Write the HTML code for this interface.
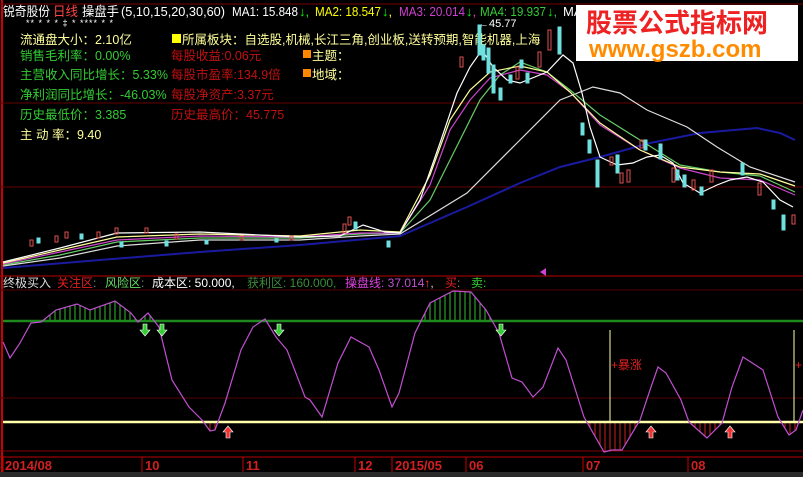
<!DOCTYPE html>
<html><head><meta charset="utf-8"><style>
html,body{margin:0;padding:0;background:#000;width:803px;height:477px;overflow:hidden}
svg{display:block}
text{font-family:"Liberation Sans","Noto Sans CJK SC","WenQuanYi Zen Hei",sans-serif}
</style></head><body>
<svg id="s" width="803" height="477" viewBox="0 0 803 477" xmlns="http://www.w3.org/2000/svg">
<rect width="803" height="477" fill="#000"/>
<line x1="2" y1="0" x2="2" y2="472" stroke="#c00" stroke-width="2"/>
<line x1="0" y1="4" x2="803" y2="4" stroke="#700" />
<line x1="0" y1="103" x2="803" y2="103" stroke="#600"/>
<line x1="0" y1="187" x2="803" y2="187" stroke="#600"/>
<line x1="0" y1="276" x2="803" y2="276" stroke="#b00"/>
<line x1="0" y1="290" x2="803" y2="290" stroke="#500"/>
<line x1="0" y1="398" x2="803" y2="398" stroke="#500"/>
<line x1="0" y1="451" x2="803" y2="451" stroke="#800"/>
<line x1="0" y1="457" x2="803" y2="457" stroke="#b00"/>
<rect x="0" y="472" width="803" height="5" fill="#2a2a2a"/>
<g stroke="#c00"><line x1="3" y1="457" x2="3" y2="472"/><line x1="142" y1="457" x2="142" y2="472"/><line x1="243" y1="457" x2="243" y2="472"/><line x1="355" y1="457" x2="355" y2="472"/><line x1="392" y1="457" x2="392" y2="472"/><line x1="466" y1="457" x2="466" y2="472"/><line x1="583" y1="457" x2="583" y2="472"/><line x1="688" y1="457" x2="688" y2="472"/></g>
<g fill="#d02020" font-size="13" font-weight="bold"><text x="5" y="470">2014/08</text><text x="145" y="470">10</text><text x="246" y="470">11</text><text x="358" y="470">12</text><text x="395" y="470">2015/05</text><text x="469" y="470">06</text><text x="586" y="470">07</text><text x="691" y="470">08</text></g>
<g font-size="13">
<text x="3" y="16" fill="#fff" textLength="47" lengthAdjust="spacingAndGlyphs">锐奇股份</text>
<text x="53" y="16" fill="#f44" textLength="25" lengthAdjust="spacingAndGlyphs">日线</text>
<text x="82" y="16" fill="#fff" textLength="37" lengthAdjust="spacingAndGlyphs">操盘手</text>
<text x="121" y="16" fill="#fff" textLength="104" lengthAdjust="spacingAndGlyphs">(5,10,15,20,30,60)</text>
<text x="232" y="16" fill="#fff" textLength="66" lengthAdjust="spacingAndGlyphs">MA1: 15.848</text><text x="299" y="16" fill="#0f0">↓,</text>
<text x="315" y="16" fill="#ff0" textLength="66" lengthAdjust="spacingAndGlyphs">MA2: 18.547</text><text x="382" y="16" fill="#0f0">↓<tspan fill="#ff0">,</tspan></text>
<text x="399" y="16" fill="#d040d0" textLength="66" lengthAdjust="spacingAndGlyphs">MA3: 20.014</text><text x="466" y="16" fill="#0f0">↓<tspan fill="#d040d0">,</tspan></text>
<text x="480" y="16" fill="#3c3" textLength="66" lengthAdjust="spacingAndGlyphs">MA4: 19.937</text><text x="547" y="16" fill="#0f0">↓<tspan fill="#3c3">,</tspan></text>
<text x="563" y="16" fill="#fff">MA</text>
</g>
<text x="26" y="26" font-size="9" fill="#fff" letter-spacing="1">** *        *       *      ‡         *       **** *       *</text>
<text x="478" y="27" font-size="11" fill="#fff">←45.77</text>
<g font-size="12.5">
<text x="20" y="44" fill="#ffff99">流通盘大小：2.10亿</text>
<text x="20" y="60" fill="#33cc33">销售毛利率：0.00%</text>
<text x="20" y="79" fill="#33cc33">主营收入同比增长：5.33%</text>
<text x="20" y="99" fill="#33cc33">净利润同比增长：-46.03%</text>
<text x="20" y="119" fill="#33cc33">历史最低价：3.385</text>
<text x="20" y="139" fill="#ffff99">主 动 率：9.40</text>
<rect x="172" y="34" width="9" height="9" fill="#ff0"/>
<text x="182" y="44" fill="#ffff99">所属板块：自选股,机械,长江三角,创业板,送转预期,智能机器,上海</text>
<text x="171" y="60" fill="#c01010">每股收益:0.06元</text>
<text x="171" y="79" fill="#c01010">每股市盈率:134.9倍</text>
<text x="171" y="99" fill="#c01010">每股净资产:3.37元</text>
<text x="171" y="119" fill="#c01010">历史最高价：45.775</text>
<rect x="303" y="50" width="8" height="8" fill="#f80"/><text x="312" y="60" fill="#ffff99">主题：</text>
<rect x="303" y="69" width="8" height="8" fill="#f80"/><text x="312" y="79" fill="#ffff99">地域：</text>
</g>
<g fill="none" stroke-width="1.2">
<polyline stroke="#1a1aa0" stroke-width="2" points="3,268 100,260 200,252 300,245 400,236 467,207 520,183 560,167 600,157 650,143 700,133 757,128 780,133 795,140"/>
<polyline stroke="#ddd" points="3,266 60,258 117,246 200,240 300,240 360,236 400,234 467,193 517,143 560,100 593,87 620,93 647,110 687,127 717,147 750,167 795,182"/>
<polyline stroke="#6c6" points="3,265 60,255 117,242 200,238 300,238 360,234 400,233 430,200 455,150 480,100 500,75 520,62 547,72 570,90 600,115 640,140 680,165 720,172 760,176 795,192"/>
<polyline stroke="#c4c" points="3,264 60,252 117,240 200,236 300,237 360,233 400,233 430,185 450,130 470,100 490,78 520,70 547,75 570,92 600,125 640,150 680,168 720,178 760,180 795,195"/>
<polyline stroke="#ff9" points="3,263 60,250 117,237 200,234 300,236 360,230 400,232 430,175 450,120 470,90 490,72 520,66 547,72 570,92 600,123 640,150 680,167 720,172 760,174 795,186"/>
<polyline stroke="#fff" points="3,262 60,248 117,233 200,232 300,237 340,236 363,225 385,232 400,233 420,200 440,143 457,93 470,67 482,50 493,67 507,80 520,83 547,72 563,55 573,63 582,93 590,127 600,157 617,165 633,163 647,157 660,155 673,163 683,183 700,193 717,185 730,180 747,177 763,182 780,200 793,207"/>
</g>
<g stroke-width="1">
<g stroke="#e05050" fill="none">
<rect x="30" y="240" width="3" height="6"/><rect x="55" y="236" width="3" height="6"/><rect x="65" y="232" width="3" height="6"/><rect x="97" y="232" width="3" height="6"/><rect x="115" y="228" width="3" height="6"/><rect x="145" y="228" width="3" height="5"/><rect x="175" y="234" width="3" height="5"/><rect x="240" y="236" width="3" height="4"/><rect x="290" y="236" width="3" height="4"/><rect x="343" y="224" width="3" height="9"/><rect x="348" y="217" width="3" height="8"/><rect x="460" y="57" width="3" height="10"/><rect x="516" y="67" width="3" height="12"/><rect x="538" y="52" width="3" height="15"/><rect x="548" y="30" width="3" height="20"/><rect x="610" y="157" width="3" height="8"/><rect x="620" y="173" width="3" height="10"/><rect x="627" y="170" width="3" height="12"/><rect x="640" y="140" width="3" height="8"/><rect x="672" y="168" width="3" height="14"/><rect x="692" y="180" width="3" height="10"/><rect x="710" y="170" width="3" height="12"/><rect x="758" y="183" width="3" height="12"/><rect x="792" y="215" width="3" height="9"/>
</g>
<g fill="#6fe0e0" stroke="#6fe0e0">
<rect x="37" y="238" width="3" height="5"/><rect x="80" y="234" width="3" height="5"/><rect x="120" y="242" width="3" height="5"/><rect x="165" y="241" width="3" height="5"/><rect x="205" y="240" width="3" height="4"/><rect x="275" y="239" width="3" height="3"/><rect x="354" y="222" width="3" height="7"/><rect x="387" y="241" width="3" height="6"/><rect x="478" y="25" width="3" height="30"/><rect x="482" y="45" width="3" height="15"/><rect x="487" y="48" width="3" height="25"/><rect x="492" y="65" width="3" height="28"/><rect x="499" y="88" width="3" height="12"/><rect x="509" y="75" width="3" height="8"/><rect x="520" y="60" width="3" height="8"/><rect x="526" y="73" width="3" height="10"/><rect x="558" y="27" width="3" height="27"/><rect x="581" y="123" width="3" height="12"/><rect x="588" y="140" width="3" height="13"/><rect x="596" y="160" width="3" height="27"/><rect x="616" y="155" width="3" height="18"/><rect x="644" y="140" width="3" height="10"/><rect x="659" y="144" width="3" height="15"/><rect x="676" y="170" width="3" height="10"/><rect x="683" y="175" width="3" height="12"/><rect x="700" y="187" width="3" height="8"/><rect x="741" y="163" width="3" height="12"/><rect x="772" y="200" width="3" height="9"/><rect x="782" y="215" width="3" height="15"/></g>
</g>
<rect x="576" y="5" width="222" height="56" fill="#fff"/>
<text x="586" y="32" font-size="26" font-weight="bold" fill="#ee2222">股票公式指标网</text>
<text x="589" y="57" font-size="24" font-weight="bold" fill="#ff8c00">www.gszb.com</text>
<polygon points="540,272 546,268 546,276" fill="#d040d0"/>
<g font-size="12">
<text x="3" y="287" fill="#ddd">终极买入</text>
<text x="57" y="287" fill="#e02020">关注区<tspan fill="#888">:</tspan></text>
<text x="105" y="287" fill="#66dd66">风险区<tspan fill="#888">:</tspan></text>
<text x="152" y="287" fill="#fff">成本区: 50.000,</text>
<text x="247" y="287" fill="#3a8a3a">获利区: 160.000,</text>
<text x="345" y="287" fill="#e040e0">操盘线<tspan fill="#c050d0">: 37.014</tspan><tspan fill="#f44">↑</tspan><tspan fill="#ddd">,</tspan></text>
<text x="445" y="287" fill="#e02020">买<tspan fill="#888">:</tspan></text>
<text x="471" y="287" fill="#3c3">卖:</text>
</g>
<g id="hatch"></g>
<line x1="3" y1="321" x2="803" y2="321" stroke="#1e8a1e" stroke-width="2.5"/>
<line x1="3" y1="422" x2="803" y2="422" stroke="#ffffaa" stroke-width="2.5"/>
<line x1="610" y1="330" x2="610" y2="422" stroke="#ffffaa"/>
<line x1="794" y1="330" x2="794" y2="422" stroke="#ffffaa"/>
<text x="611" y="369" font-size="12" fill="#e02020">+暴涨</text>
<text x="795" y="369" font-size="12" fill="#e02020">+</text>
<polyline id="cv" fill="none" stroke="#c050d0" stroke-width="1.2" points="3,342 10,358 20,343 31,323 41,322 56,310 77,304 90,310 115,301 131,313 138,322 148,313 159,327 172,380 189,407 202,420 210,431 215,430 225,403 241,350 253,327 265,319 276,337 287,350 305,397 310,400 322,417 338,363 351,337 369,347 379,370 392,407 399,393 415,333 430,303 453,291 471,292 486,310 499,333 512,378 522,382 533,397 543,387 558,348 566,360 584,417 604,452 612,450 622,450 640,420 650,390 658,367 666,373 681,400 689,422 707,438 722,423 732,387 743,357 763,370 778,417 789,435 796,430 803,410"/>
<g id="arrows"></g>
</svg>
<script>
(function(){
var ns="http://www.w3.org/2000/svg";
var pts=document.getElementById('cv').getAttribute('points').trim().split(/\s+/).map(function(p){return p.split(',').map(Number);});
function yAt(x){for(var i=0;i<pts.length-1;i++){if(x>=pts[i][0]&&x<=pts[i+1][0]){var t=(x-pts[i][0])/(pts[i+1][0]-pts[i][0]);return pts[i][1]+t*(pts[i+1][1]-pts[i][1]);}}return null;}
var h=document.getElementById('hatch');
for(var x=5;x<803;x+=5){var y=yAt(x);if(y==null)continue;
 if(y<321){var l=document.createElementNS(ns,'line');l.setAttribute('x1',x);l.setAttribute('x2',x);l.setAttribute('y1',y);l.setAttribute('y2',321);l.setAttribute('stroke','#33bb33');h.appendChild(l);}
 if(y>422){var l=document.createElementNS(ns,'line');l.setAttribute('x1',x);l.setAttribute('x2',x);l.setAttribute('y1',422);l.setAttribute('y2',y);l.setAttribute('stroke','#cc2020');h.appendChild(l);}
}
var a=document.getElementById('arrows');
function arrow(x,y,down,c){var p=document.createElementNS(ns,'polygon');var s;
 if(down)s=[[x-2,y],[x+2,y],[x+2,y+6],[x+5,y+6],[x,y+12],[x-5,y+6],[x-2,y+6]];
 else s=[[x,y],[x+5,y+6],[x+2,y+6],[x+2,y+12],[x-2,y+12],[x-2,y+6],[x-5,y+6]];
 p.setAttribute('points',s.map(function(q){return q.join(',')}).join(' '));p.setAttribute('fill',c);p.setAttribute('stroke','#fff');p.setAttribute('stroke-width','0.6');a.appendChild(p);}
arrow(145,324,true,'#33cc33');arrow(162,324,true,'#33cc33');arrow(279,324,true,'#33cc33');arrow(501,324,true,'#33cc33');
arrow(228,426,false,'#ee3333');arrow(651,426,false,'#ee3333');arrow(730,426,false,'#ee3333');
})();
</script>
</body></html>
